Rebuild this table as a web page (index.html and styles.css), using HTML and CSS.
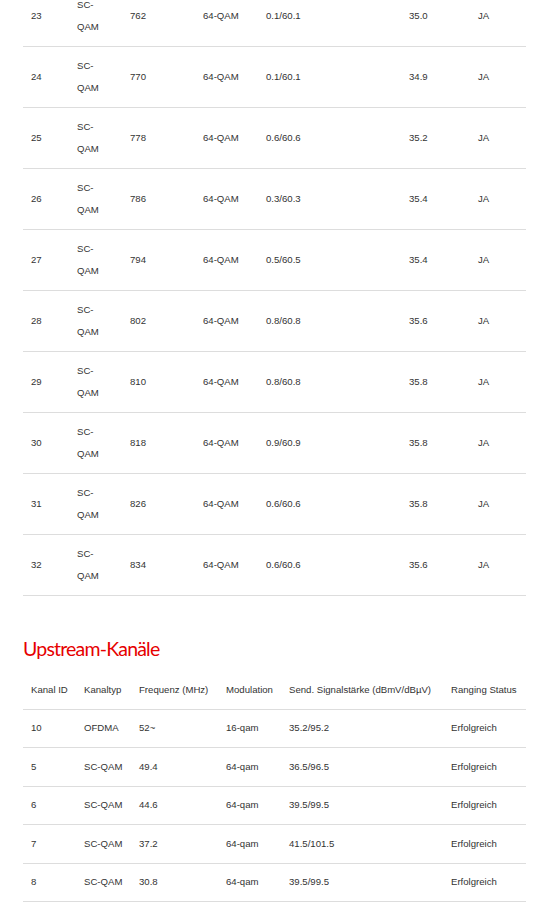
FILE: index.html
```html
<!DOCTYPE html>
<html lang="de">
<head>
<meta charset="utf-8">
<title>Kanäle</title>
<link rel="stylesheet" href="styles.css">
</head>
<body>
<main class="page">
  <table class="chan-table downstream">
    <colgroup>
      <col class="dc1"><col class="dc2"><col class="dc3"><col class="dc4"><col class="dc5"><col class="dc6"><col class="dc7">
    </colgroup>
    <tbody>
      <tr><td>23</td><td>SC-QAM</td><td>762</td><td>64-QAM</td><td>0.1/60.1</td><td>35.0</td><td>JA</td></tr>
      <tr><td>24</td><td>SC-QAM</td><td>770</td><td>64-QAM</td><td>0.1/60.1</td><td>34.9</td><td>JA</td></tr>
      <tr><td>25</td><td>SC-QAM</td><td>778</td><td>64-QAM</td><td>0.6/60.6</td><td>35.2</td><td>JA</td></tr>
      <tr><td>26</td><td>SC-QAM</td><td>786</td><td>64-QAM</td><td>0.3/60.3</td><td>35.4</td><td>JA</td></tr>
      <tr><td>27</td><td>SC-QAM</td><td>794</td><td>64-QAM</td><td>0.5/60.5</td><td>35.4</td><td>JA</td></tr>
      <tr><td>28</td><td>SC-QAM</td><td>802</td><td>64-QAM</td><td>0.8/60.8</td><td>35.6</td><td>JA</td></tr>
      <tr><td>29</td><td>SC-QAM</td><td>810</td><td>64-QAM</td><td>0.8/60.8</td><td>35.8</td><td>JA</td></tr>
      <tr><td>30</td><td>SC-QAM</td><td>818</td><td>64-QAM</td><td>0.9/60.9</td><td>35.8</td><td>JA</td></tr>
      <tr><td>31</td><td>SC-QAM</td><td>826</td><td>64-QAM</td><td>0.6/60.6</td><td>35.8</td><td>JA</td></tr>
      <tr><td>32</td><td>SC-QAM</td><td>834</td><td>64-QAM</td><td>0.6/60.6</td><td>35.6</td><td>JA</td></tr>
    </tbody>
  </table>

  <h2 class="section-title">Upstream-Kanäle</h2>

  <table class="chan-table upstream">
    <colgroup>
      <col class="uc1"><col class="uc2"><col class="uc3"><col class="uc4"><col class="uc5"><col class="uc6">
    </colgroup>
    <thead>
      <tr><th>Kanal ID</th><th>Kanaltyp</th><th>Frequenz (MHz)</th><th>Modulation</th><th>Send. Signalstärke (dBmV/dBµV)</th><th>Ranging Status</th></tr>
    </thead>
    <tbody>
      <tr><td>10</td><td>OFDMA</td><td>52~</td><td>16-qam</td><td>35.2/95.2</td><td>Erfolgreich</td></tr>
      <tr><td>5</td><td>SC-QAM</td><td>49.4</td><td>64-qam</td><td>36.5/96.5</td><td>Erfolgreich</td></tr>
      <tr><td>6</td><td>SC-QAM</td><td>44.6</td><td>64-qam</td><td>39.5/99.5</td><td>Erfolgreich</td></tr>
      <tr><td>7</td><td>SC-QAM</td><td>37.2</td><td>64-qam</td><td>41.5/101.5</td><td>Erfolgreich</td></tr>
      <tr><td>8</td><td>SC-QAM</td><td>30.8</td><td>64-qam</td><td>39.5/99.5</td><td>Erfolgreich</td></tr>
    </tbody>
  </table>
</main>
</body>
</html>
```

FILE: styles.css
```css
html, body {
  margin: 0;
  padding: 0;
  background: #ffffff;
}

body {
  font-family: "Liberation Sans", Arial, sans-serif;
  color: #333333;
}

.page {
  width: 503px;
  margin: 0 0 0 23px;
  overflow: hidden;
}

.chan-table {
  width: 503px;
  table-layout: fixed;
  border-collapse: collapse;
  font-size: 9.6px;
  line-height: 22.5px;
}

.chan-table th,
.chan-table td {
  padding: 7.5px 8px;
  text-align: left;
  vertical-align: middle;
  font-weight: normal;
  border-bottom: 1px solid #dddddd;
  color: #333333;
}

.downstream {
  margin-top: -14px;
}

.dc1 { width: 46px; }
.dc2 { width: 53px; }
.dc3 { width: 73px; }
.dc4 { width: 63px; }
.dc5 { width: 143px; }
.dc6 { width: 69px; }
.dc7 { width: 56px; }

.uc1 { width: 53px; }
.uc2 { width: 55px; }
.uc3 { width: 87px; }
.uc4 { width: 63px; }
.uc5 { width: 162px; }
.uc6 { width: 83px; }

.section-title {
  margin: 40px 0 10px;
  font-family: Lato, "Open Sans", sans-serif;
  font-weight: normal;
  font-size: 19.5px;
  line-height: 25px;
  letter-spacing: -0.8px;
  color: #e60000;
}
```
